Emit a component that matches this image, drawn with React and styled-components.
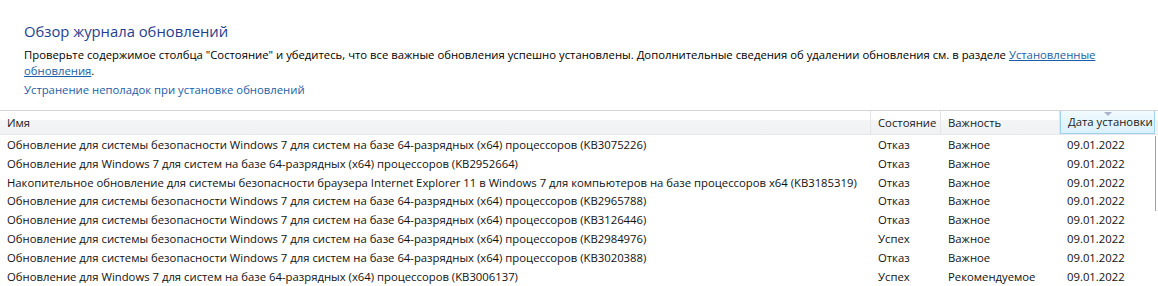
import React from "react";
import styled, { createGlobalStyle } from "styled-components";

const Global = createGlobalStyle`
  html, body { margin: 0; padding: 0; background: #fff; }
  body { font-family: "Open Sans", "Noto Sans", sans-serif; font-size: 11.3px; color: #000; }
`;

const Page = styled.div`
  width: 1158px;
  height: 286px;
  overflow: hidden;
  background: #fff;
  display: flex;
  flex-direction: column;
`;

const Intro = styled.div`
  padding: 20px 0 0 24px;
  height: 111px;
  box-sizing: border-box;
`;

const Title = styled.h1`
  margin: 0 0 5px;
  font-weight: 400;
  font-size: 14.8px;
  line-height: 22px;
  color: #1e3e8f;
`;

const Text = styled.p`
  margin: 0;
  font-size: 11.3px;
  line-height: 16px;
  color: #000;
  width: 1110px;
`;

const Link = styled.a`
  color: #1a5ea8;
  text-decoration: ${(p) => (p.$underline ? "underline" : "none")};
  cursor: pointer;
`;

const Trouble = styled.div`
  margin-top: 3px;
  line-height: 16px;
`;

const Table = styled.div`
  display: flex;
  flex-direction: column;
  border-top: 1px solid #d5d5d5;
`;

const Grid = `
  display: grid;
  grid-template-columns: 871px 70px 119px 95px 3px;
`;

const HeaderRow = styled.div`
  ${Grid}
  height: 23px;
  background: linear-gradient(#ffffff 0%, #ffffff 40%, #f3f4f6 41%, #f1f2f4 100%);
  border-bottom: 1px solid #e6e8eb;
`;

const HeadCell = styled.div`
  position: relative;
  display: flex;
  align-items: center;
  padding-left: 7px;
  border-right: 1px solid #e3e5e8;
  color: #1a1a1a;
  white-space: nowrap;
  ${(p) =>
    p.$sorted &&
    `
    background: linear-gradient(#f2fafe 0%, #e5f5fd 50%, #d9f0fc 100%);
    border: 1px solid #9bd3f0;
    border-top: none;
  `}
`;

const SortArrow = styled.span`
  position: absolute;
  top: 1px;
  left: 50%;
  margin-left: -4px;
  width: 0;
  height: 0;
  border-left: 4px solid transparent;
  border-right: 4px solid transparent;
  border-top: 4px solid #a7b6cc;
`;

const Body = styled.div`
  display: flex;
  flex-direction: column;
  padding-top: 1px;
`;

const Row = styled.div`
  ${Grid}
  height: 18.8px;
  align-items: center;
`;

const Cell = styled.div`
  padding-left: 7px;
  white-space: nowrap;
  overflow: hidden;
  line-height: 18px;
  color: #111;
`;

const ScrollEdge = styled.div`
  align-self: stretch;
  border-left: 1px solid ${(p) => (p.$on ? "#a0a0a0" : "transparent")};
`;

const rows = [
  ["Обновление для системы безопасности Windows 7 для систем на базе 64-разрядных (x64) процессоров (KB3075226)", "Отказ", "Важное"],
  ["Обновление для Windows 7 для систем на базе 64-разрядных (x64) процессоров (KB2952664)", "Отказ", "Важное"],
  ["Накопительное обновление для системы безопасности браузера Internet Explorer 11 в Windows 7 для компьютеров на базе процессоров x64 (KB3185319)", "Отказ", "Важное"],
  ["Обновление для системы безопасности Windows 7 для систем на базе 64-разрядных (x64) процессоров (KB2965788)", "Отказ", "Важное"],
  ["Обновление для системы безопасности Windows 7 для систем на базе 64-разрядных (x64) процессоров (KB3126446)", "Отказ", "Важное"],
  ["Обновление для системы безопасности Windows 7 для систем на базе 64-разрядных (x64) процессоров (KB2984976)", "Успех", "Важное"],
  ["Обновление для системы безопасности Windows 7 для систем на базе 64-разрядных (x64) процессоров (KB3020388)", "Отказ", "Важное"],
  ["Обновление для Windows 7 для систем на базе 64-разрядных (x64) процессоров (KB3006137)", "Успех", "Рекомендуемое"],
];

export default function App() {
  return (
    <Page>
      <Global />
      <Intro>
        <Title>Обзор журнала обновлений</Title>
        <Text>
          Проверьте содержимое столбца "Состояние" и убедитесь, что все важные обновления успешно установлены. Дополнительные сведения об удалении обновления см. в разделе{" "}
          <Link $underline>Установленные обновления</Link>.
        </Text>
        <Trouble>
          <Link>Устранение неполадок при установке обновлений</Link>
        </Trouble>
      </Intro>
      <Table>
        <HeaderRow>
          <HeadCell>Имя</HeadCell>
          <HeadCell>Состояние</HeadCell>
          <HeadCell>Важность</HeadCell>
          <HeadCell $sorted>
            <SortArrow />
            Дата установки
          </HeadCell>
          <ScrollEdge />
        </HeaderRow>
        <Body>
          {rows.map((r, i) => (
            <Row key={i}>
              <Cell>{r[0]}</Cell>
              <Cell>{r[1]}</Cell>
              <Cell>{r[2]}</Cell>
              <Cell>09.01.2022</Cell>
              <ScrollEdge $on={i < 4} />
            </Row>
          ))}
        </Body>
      </Table>
    </Page>
  );
}
